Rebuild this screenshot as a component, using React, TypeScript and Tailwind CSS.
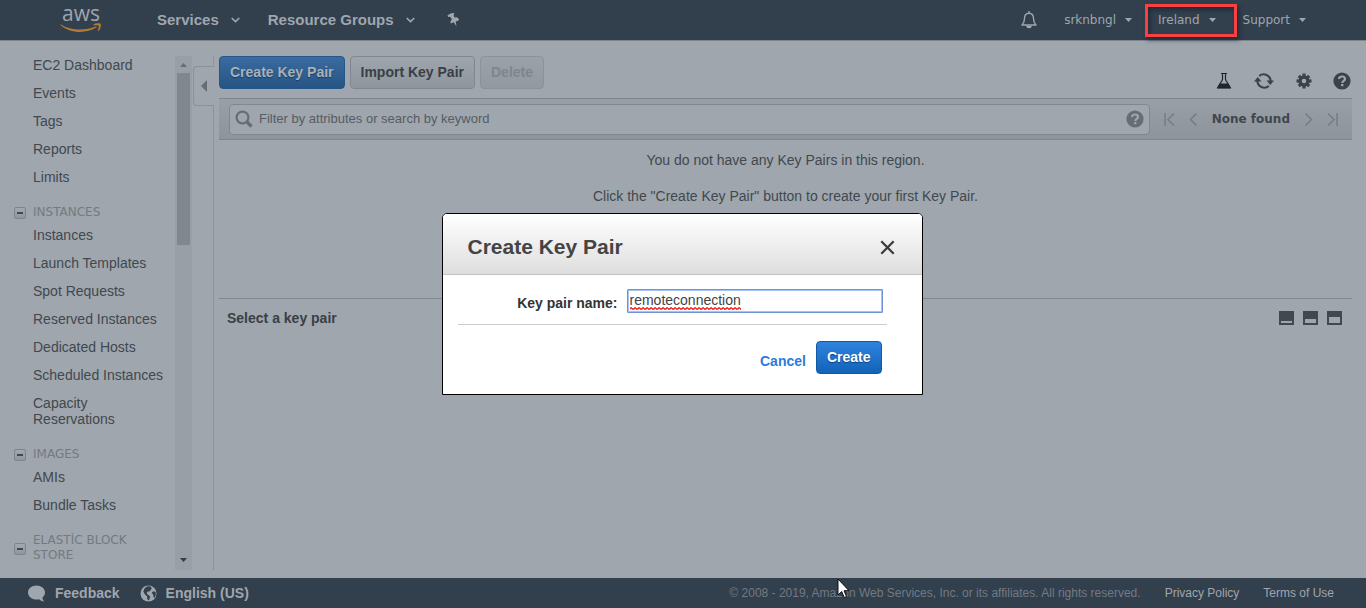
import React from "react";

const topLinks = ["EC2 Dashboard", "Events", "Tags", "Reports", "Limits"];

const sections = [
  {
    title: "INSTANCES",
    items: [
      "Instances",
      "Launch Templates",
      "Spot Requests",
      "Reserved Instances",
      "Dedicated Hosts",
      "Scheduled Instances",
      "Capacity Reservations",
    ],
  },
  { title: "IMAGES", items: ["AMIs", "Bundle Tasks"] },
  { title: "ELASTİC BLOCK STORE", items: [] as string[] },
];

function AwsLogo() {
  return (
    <a href="#home" aria-label="AWS" className="flex w-[42px] flex-col items-center">
      <span className="h-4 font-['Open_Sans','Noto_Sans',sans-serif] text-[21px] leading-[12px] font-medium text-[#a0a6ad]">
        aws
      </span>
      <svg width="42" height="11" viewBox="0 0 42 11" fill="#b17a35" aria-hidden="true">
        <path d="M0.5 1.2C11 8 25 8 36 3.300l.8 1C26 11 10 10.800 0.200 1.700z" />
        <path d="M33.500 1.400c2.500-1.400 6.400-1.300 7.200-.5.700 1-.2 5.300-2.300 7.200-.5.300-.9.100-.7-.4.700-1.700 1.500-4.500 1-5.100-.5-.6-3.200-.5-4.700-.3-.600.1-.9-.5-.5-.9z" />
      </svg>
    </a>
  );
}

function ThinCaret() {
  return (
    <svg width="9" height="6" viewBox="0 0 9 6" fill="none" stroke="currentColor" strokeWidth="1.700" aria-hidden="true">
      <path d="M0.700 1l3.800 3.600L8.300 1" />
    </svg>
  );
}

function Caret() {
  return (
    <svg width="7" height="4" viewBox="0 0 7 4" fill="currentColor" aria-hidden="true">
      <path d="M0 0h7L3.500 4z" />
    </svg>
  );
}

function Question({ color }: { color: string }) {
  return (
    <svg width="18" height="18" viewBox="0 0 18 18" aria-hidden="true">
      <circle cx="9" cy="9" r="8.600" fill={color} />
      <path d="M6 6.900C6 3.700 12 3.700 12 6.900c0 2-2.700 2-2.700 4" fill="none" stroke="#9fa6ad" strokeWidth="2.200" />
      <rect x="8.100" y="12" width="2.300" height="2.200" fill="#9fa6ad" />
    </svg>
  );
}

function TopBar() {
  return (
    <header className="flex h-[41px] shrink-0 items-center border-b border-[#7d858d] bg-[#323f4d] pl-[60px] font-['Liberation_Sans',sans-serif] text-[#a0a6ad]">
      <AwsLogo />
      <nav className="ml-[55px] flex items-center text-[15px] font-bold [text-shadow:0_1px_1px_#1b232c]">
        <button className="flex items-center gap-3">
          Services <ThinCaret />
        </button>
        <button className="ml-7 flex items-center gap-3">
          Resource Groups <ThinCaret />
        </button>
        <button aria-label="Pin shortcuts" className="ml-8">
          <svg width="12" height="14" viewBox="0 0 12 14" fill="currentColor" aria-hidden="true">
            <path d="M4.200.2l2.900-.2.300 1-.900.8 1 2.800 2.200-.3c1.300.3 2.100 1.500 2.300 2.900l-3.200 1.300.6 4.900-2.500-4.100-3.200 1.100c-.5-1.600 0-3 1.300-3.900L3.200 3.800l-2 .1L.5 2.200z" />
          </svg>
        </button>
      </nav>
      <nav className="ml-auto flex items-center pr-[60px] font-['DejaVu_Sans',sans-serif] text-xs">
        <button aria-label="Notifications" className="mr-[27px]">
          <svg width="16" height="18" viewBox="0 0 16 18" fill="none" stroke="currentColor" strokeWidth="1.400" aria-hidden="true">
            <path d="M8 0v2M1 14c1.800-1.700 2.500-3 2.500-6.500C3.500 4 5.200 2.200 8 2.200S12.500 4 12.500 7.500c0 3.500.7 4.800 2.500 6.500z" strokeLinejoin="round" />
            <path d="M6 15.500h4c0 1.500-4 1.500-4 0z" fill="currentColor" />
          </svg>
        </button>
        <button className="flex items-center gap-[9px]">
          srknbngl <Caret />
        </button>
        <div className="relative ml-[26px]">
          <button className="flex items-center gap-[9px]">
            Ireland <Caret />
          </button>
          <span className="pointer-events-none absolute -top-2 -right-[21px] -bottom-[9px] -left-[13px] border-3 border-[#f94144] shadow-[2px_3px_4px_#1b232cb0,inset_2px_3px_4px_#1b232cb0]" />
        </div>
        <button className="ml-[27px] flex items-center gap-[9px]">
          Support <Caret />
        </button>
      </nav>
    </header>
  );
}

function Sidebar() {
  return (
    <aside className="flex w-[219px] shrink-0 pt-[15px] pb-2">
      <nav className="w-[175px] overflow-hidden text-sm leading-4 text-[#41484f]">
        <ul className="flex flex-col gap-3 pt-px pl-[33px]">
          {topLinks.map((link) => (
            <li key={link}>
              <a href="#nav">{link}</a>
            </li>
          ))}
        </ul>
        {sections.map((section) => (
          <section key={section.title} className="pt-5">
            <h2 className="flex items-center gap-[7px] pl-[14px] font-['DejaVu_Sans',sans-serif] text-xs leading-[15px] text-[#737a81]">
              <button
                aria-label={"Collapse " + section.title}
                className="mt-px flex size-3 shrink-0 items-center justify-center rounded-xs border border-[#7e858d] bg-linear-to-b from-[#a1a8af] to-[#8f969e]"
              >
                <span className="h-0.5 w-1.5 bg-[#41484f]" />
              </button>
              <span className="w-[110px]">{section.title}</span>
            </h2>
            <ul className="flex flex-col gap-3 pt-[7px] pl-[33px]">
              {section.items.map((item) => (
                <li key={item} className="max-w-[132px]">
                  <a href="#nav">{item}</a>
                </li>
              ))}
            </ul>
          </section>
        ))}
      </nav>
      <div className="flex w-[17px] flex-col items-center bg-[#989fa6]">
        <svg width="7" height="17" viewBox="0 0 7 17" fill="#666d75" aria-hidden="true">
          <path d="M0 11h7L3.500 7z" />
        </svg>
        <div className="h-[172px] w-[13px] bg-[#80878e]" />
        <svg className="mt-auto" width="7" height="17" viewBox="0 0 7 17" fill="#363c43" aria-hidden="true">
          <path d="M0 5h7L3.500 9z" />
        </svg>
      </div>
      <div className="flex w-[22px] flex-col">
        <div className="h-2.5 border-r border-[#8b9299]" />
        <button
          aria-label="Collapse navigation"
          className="ml-px flex h-10 items-center justify-center rounded-l border border-r-0 border-[#8b9299]"
        >
          <svg width="6" height="12" viewBox="0 0 6 12" fill="#666d75" aria-hidden="true">
            <path d="M6 0v12L0 6z" />
          </svg>
        </button>
        <div className="grow border-r border-[#8b9299]" />
      </div>
    </aside>
  );
}

function Toolbar() {
  return (
    <div className="flex h-[42px] items-start gap-[5px] pr-[15px] text-sm font-bold">
      <button className="h-[33px] rounded border border-[#25568a] bg-linear-to-b from-[#3b6ba0] to-[#265584] px-2.5 pb-0.5 text-[#a9b1ba] [text-shadow:0_1px_1px_#1c3c60]">
        Create Key Pair
      </button>
      <button className="h-[33px] rounded border border-[#80878e] bg-linear-to-b from-[#9ea5ac] to-[#8e959d] px-2.5 pb-0.5 text-[#393f46]">
        Import Key Pair
      </button>
      <button disabled className="h-[33px] rounded border border-[#8b9299] bg-linear-to-b from-[#9aa1a8] to-[#92999f] px-2.5 pb-0.5 text-[#7f868d]">
        Delete
      </button>
      <div className="mt-4 ml-auto flex items-center gap-[21px]">
        <button aria-label="Experiments">
          <svg width="16" height="18" viewBox="0 0 16 18" fill="none" stroke="#1f262e" strokeWidth="1.200" aria-hidden="true">
            <path d="M5 1.500h6M6.500 1.500v6.200L1.700 15.700h12.600L9.500 7.700V1.500" />
            <path d="M3.500 11.500h9l2.300 4.900H1.200z" fill="#1f262e" stroke="none" />
          </svg>
        </button>
        <button aria-label="Refresh">
          <svg width="22" height="18" viewBox="0 0 22 18" fill="none" stroke="#3b424a" strokeWidth="2.200" aria-hidden="true">
            <path d="M6.200 4A6.900 6.900 0 0 1 17.600 9M15.800 14A6.900 6.900 0 0 1 4.400 9" />
            <path d="M13.500 8.500h7.500l-3.700 4.500zM1 9.500h7.500l-3.700-4.500z" fill="#3b424a" stroke="none" />
          </svg>
        </button>
        <button aria-label="Settings">
          <svg width="16" height="16" viewBox="0 0 16 16" aria-hidden="true">
            <g fill="#3b424a">
              <circle cx="8" cy="8" r="5.500" />
              <rect x="6.400" y="0.500" width="3.200" height="15" />
              <rect x="0.500" y="6.400" width="15" height="3.200" />
              <rect x="6.400" y="0.700" width="3.200" height="14.600" transform="rotate(45 8 8)" />
              <rect x="6.400" y="0.700" width="3.200" height="14.600" transform="rotate(-45 8 8)" />
            </g>
            <circle cx="8" cy="8" r="2.300" fill="#9fa6ad" />
          </svg>
        </button>
        <button aria-label="Help">
          <Question color="#3b424a" />
        </button>
      </div>
    </div>
  );
}

function FilterBar() {
  return (
    <div className="mr-[14px] flex h-[42px] shrink-0 items-center border-y border-[#80878e] bg-linear-to-b from-[#999fa7] to-[#8d949b] pr-[14px] pl-2.5">
      <label className="flex h-[31px] grow items-center gap-1.5 rounded border border-[#80878e] bg-[#9fa6ad] px-[5px]">
        <svg width="18" height="18" viewBox="0 0 18 18" fill="none" stroke="#666d75" aria-hidden="true">
          <circle cx="7.500" cy="7.500" r="5.900" strokeWidth="2.200" />
          <path d="M11.500 11.500l5 5" strokeWidth="3.200" />
        </svg>
        <input
          type="search"
          aria-label="Filter key pairs"
          placeholder="Filter by attributes or search by keyword"
          className="grow bg-transparent text-[13px] outline-none placeholder:text-[#555c64]"
        />
        <Question color="#666d75" />
      </label>
      <div className="ml-[14px] flex items-center font-['DejaVu_Sans',sans-serif] text-xs font-bold text-[#3f464d]">
        <button aria-label="First page">
          <svg width="11" height="13" viewBox="0 0 11 13" fill="none" stroke="#777e86" strokeWidth="1.600" aria-hidden="true">
            <path d="M1 0v13M10 0.500l-6 6 6 6" />
          </svg>
        </button>
        <button aria-label="Previous page" className="ml-[14px]">
          <svg width="8" height="13" viewBox="0 0 8 13" fill="none" stroke="#777e86" strokeWidth="1.600" aria-hidden="true">
            <path d="M7.500 0.500l-6 6 6 6" />
          </svg>
        </button>
        <span className="mx-[15px]">None found</span>
        <button aria-label="Next page">
          <svg width="8" height="13" viewBox="0 0 8 13" fill="none" stroke="#777e86" strokeWidth="1.600" aria-hidden="true">
            <path d="M0.500 0.500l6 6-6 6" />
          </svg>
        </button>
        <button aria-label="Last page" className="ml-[14px]">
          <svg width="11" height="13" viewBox="0 0 11 13" fill="none" stroke="#777e86" strokeWidth="1.600" aria-hidden="true">
            <path d="M10 0v13M1 0.500l6 6-6 6" />
          </svg>
        </button>
      </div>
    </div>
  );
}

function PaneIcon({ top }: { top: number }) {
  return (
    <svg width="15" height="14" viewBox="0 0 15 14" aria-hidden="true">
      <rect width="15" height="14" fill="#41484f" />
      <rect x="2" y={top} width="11" height={12 - top} fill="#9fa6ad" />
    </svg>
  );
}

function Main() {
  return (
    <main className="flex min-w-0 grow flex-col pt-[15px]">
      <Toolbar />
      <FilterBar />
      <div className="mr-[14px] flex h-[159px] shrink-0 flex-col items-center gap-4 border-b border-[#80878e] pt-2.5 text-sm leading-5 text-[#41484f]">
        <p>You do not have any Key Pairs in this region.</p>
        <p>Click the "Create Key Pair" button to create your first Key Pair.</p>
      </div>
      <div className="flex items-center pt-2.5 pr-6 pl-2">
        <h2 className="text-sm leading-[18px] font-bold text-[#393f46]">Select a key pair</h2>
        <div className="ml-auto flex gap-[9px]">
          <button aria-label="Small details pane"><PaneIcon top={10} /></button>
          <button aria-label="Medium details pane"><PaneIcon top={8} /></button>
          <button aria-label="Large details pane"><PaneIcon top={6} /></button>
        </div>
      </div>
    </main>
  );
}

function Footer() {
  return (
    <footer className="flex h-[30px] shrink-0 items-center bg-[#323f4d] pr-8 pl-7 text-[#a0a6ad]">
      <a href="#feedback" className="flex items-center gap-[9px] text-sm font-bold">
        <svg width="18" height="17" viewBox="0 0 18 17" fill="currentColor" aria-hidden="true">
          <path d="M8.500.5C13.200.5 17 3.500 17 7.500c0 2-1 3.900-2.600 5.100.2 1.600.8 2.900 1.900 4-2.200-.2-3.900-1-5.100-2.300-.9.200-1.800.300-2.700.300C3.800 14.600 0 11.500 0 7.500S3.800.5 8.500.5z" />
        </svg>
        Feedback
      </a>
      <button className="ml-5 flex items-center gap-[9px] text-sm font-bold">
        <svg width="17" height="17" viewBox="0 0 17 17" aria-hidden="true">
          <circle cx="8.500" cy="8.500" r="8" fill="#a0a6ad" />
          <path d="M7.500 1.300l3.200.2 1 2-1.800 2.700-2.600.6-.6 1.800 1.700 1.500 1.800 1.500-1.200 3.900-1.700-1.300-.3-3-2.200-2-1.500-2.600 1.200-3z" fill="#323f4d" />
          <path d="M13 6.200l2.600.7.300 2.600-1.500 3.400-1-.8-.2-2.700-1.500-1.500z" fill="#323f4d" />
        </svg>
        English (US)
      </button>
      <div className="ml-auto flex items-center gap-6 text-xs">
        <p className="text-[#717a84]">
          © 2008 - 2019, Amazon Web Services, Inc. or its affiliates. All rights reserved.
        </p>
        <a href="#privacy">Privacy Policy</a>
        <a href="#terms">Terms of Use</a>
      </div>
    </footer>
  );
}

function SpellingMark() {
  return (
    <svg className="pointer-events-none absolute bottom-[3px] left-[3px]" width="111" height="3" aria-hidden="true">
      <defs>
        <pattern id="wave" width="4" height="3" patternUnits="userSpaceOnUse">
          <path d="M-1 3.500L1 0.500L3 2.500L5 0.500" fill="none" stroke="#ef2020" strokeWidth="1.200" />
        </pattern>
      </defs>
      <rect width="111" height="3" fill="url(#wave)" />
    </svg>
  );
}

function CreateKeyPairDialog() {
  return (
    <div className="pointer-events-none absolute inset-0 flex items-center justify-center pr-0.5">
      <form
        role="dialog"
        aria-labelledby="dialog-title"
        onSubmit={(e) => e.preventDefault()}
        className="pointer-events-auto w-[481px] overflow-hidden rounded-t-[5px] border border-black bg-white"
      >
        <div className="flex h-[61px] items-center justify-between border-b border-[#c4c4c4] bg-linear-to-b from-white to-[#dedede] pt-1.5 pr-[27px] pl-[25px]">
          <h1 id="dialog-title" className="text-[21px] font-bold text-[#444]">
            Create Key Pair
          </h1>
          <button type="button" aria-label="Close">
            <svg width="15" height="15" viewBox="0 0 15 15" fill="none" stroke="#3a3a3a" strokeWidth="2.200" aria-hidden="true">
              <path d="M1.300 1.300l12.400 12.400M13.700 1.300L1.300 13.700" />
            </svg>
          </button>
        </div>
        <div className="mr-[35px] ml-[15px] flex h-[50px] items-center justify-end border-b border-[#ccc] pt-0.5 pr-1">
          <label htmlFor="key-name" className="mr-[9px] pt-1 text-sm font-bold text-[#333]">
            Key pair name:
          </label>
          <div className="relative">
            <input
              id="key-name"
              type="text"
              spellCheck={false}
              defaultValue="remoteconnection"
              className="block h-6 w-64 rounded-[1px] border border-[#6f93d8] px-0.5 pb-px text-sm text-[#444] ring-1 ring-[#a3c2f5] outline-none ring-inset"
            />
            <SpellingMark />
          </div>
        </div>
        <div className="flex items-start justify-end gap-2.5 pt-4 pr-10 pb-5 text-sm font-bold">
          <button type="button" className="mt-2.5 text-[#2b7bdc]">
            Cancel
          </button>
          <button
            type="submit"
            className="h-[33px] rounded border border-[#1259a5] bg-linear-to-b from-[#2f83dd] to-[#1163b9] px-2.5 pb-0.5 text-white [text-shadow:0_1px_1px_#0b3f78]"
          >
            Create
          </button>
        </div>
      </form>
    </div>
  );
}

export default function App() {
  return (
    <div className="relative flex h-screen flex-col overflow-hidden bg-[#9fa6ad] font-['Liberation_Sans',Arial,sans-serif]">
      <TopBar />
      <div className="flex min-h-0 grow">
        <Sidebar />
        <Main />
      </div>
      <Footer />
      <CreateKeyPairDialog />
      <svg className="pointer-events-none absolute bottom-[9px] left-[837px]" width="13" height="21" viewBox="0 0 13 21" aria-hidden="true">
        <path d="M1 1v16l3.700-3.500 2.600 6 2.200-1-2.500-5.800H12z" fill="#fff" stroke="#111" />
      </svg>
    </div>
  );
}
